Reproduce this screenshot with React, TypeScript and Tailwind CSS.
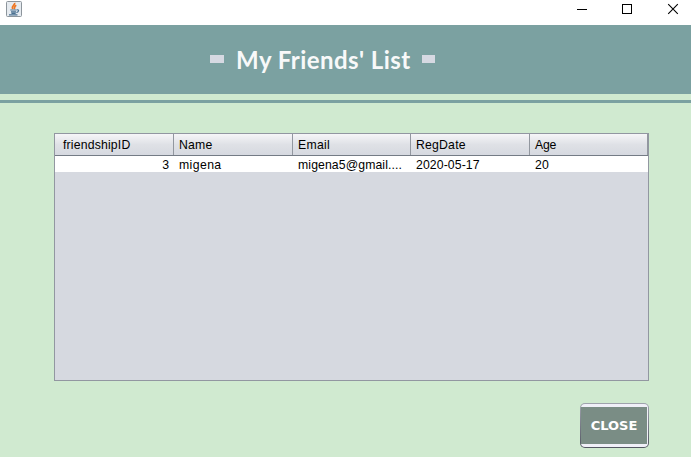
import React from 'react';

type Column = { title: string; value: string; width: string; head: string; cell: string };

const columns: Column[] = [
  { title: 'friendshipID', value: '3', width: 'w-[119px]', head: 'pl-2 tracking-[0.17px]', cell: 'pr-[5px] text-right' },
  { title: 'Name', value: 'migena', width: 'w-[119px]', head: 'pl-[5px] tracking-[0.2px]', cell: 'pl-[5px] tracking-[0.4px]' },
  { title: 'Email', value: 'migena5@gmail....', width: 'w-[118px]', head: 'pl-[5px] tracking-[0.3px]', cell: 'pl-[5px] tracking-[0.1px]' },
  { title: 'RegDate', value: '2020-05-17', width: 'w-[119px]', head: 'pl-[5px] tracking-[0.2px]', cell: 'pl-[5px] tracking-[0.1px]' },
  { title: 'Age', value: '20', width: 'w-[118px]', head: 'pl-[5px] tracking-[-0.2px]', cell: 'pl-[5px] tracking-[0.2px]' },
];

function JavaIcon() {
  return (
    <svg width="16" height="16" viewBox="0 0 16 16" fill="none">
      <rect x="0.5" y="0.5" width="15" height="15" rx="1" fill="#e6ebf0" stroke="#8d959c" />
      <path d="M8.6 1.8C9.6 4 5.2 4.6 6.6 8M10.3 4.2C7.8 5.4 9 6.4 8.2 8.2" stroke="#ee7420" strokeWidth="1.7" />
      <path d="M4.3 9h6.2M5 10.8h5M5.4 12.3h4.3M3 13.9h8.5M10.8 8.8c2.6-.5 2.2 2.2-.4 2.8" stroke="#4a7090" strokeWidth="1.2" />
    </svg>
  );
}

function TitleBar() {
  return (
    <div className="flex h-[25px] items-start justify-between bg-white pl-1.5">
      <div className="pt-px"><JavaIcon /></div>
      <svg width="131" height="25" viewBox="0 0 131 25" fill="none" stroke="#000">
        <path d="M17 9.5h10" />
        <rect x="62.5" y="4.5" width="9" height="9" />
        <path d="m108.2 4.2 9.6 9.6m0-9.6-9.6 9.6" strokeWidth="1.1" />
      </svg>
    </div>
  );
}

export default function App() {
  return (
    <div className="h-[457px] w-[691px] overflow-hidden bg-[#d0ead0] font-['Liberation_Sans',Arial,sans-serif] text-black">
      <TitleBar />
      <header className="flex h-[69px] items-start bg-[#7ba1a1] pl-[210px]">
        <span className="mt-[30px] h-2 w-3.5 bg-[#d6d9e2]" />
        <h1 className="ml-3 mt-[17px] w-[174px] whitespace-nowrap font-['Trebuchet_MS',Lato,sans-serif] text-[24px] font-bold leading-9 tracking-[0.45px] text-[#f8f9f9]">
          My Friends' List
        </h1>
        <span className="ml-3 mt-[30px] h-2 w-[13px] bg-[#d6d9e2]" />
      </header>
      <div className="mt-1.5 h-[3px] bg-[#7ba1a1]" />
      <main className="ml-[54px] mt-[30px] flex w-[595px] flex-col items-end">
        <div className="h-[248px] w-full border border-[#9297a1] bg-[#d6d9e0] text-[12.25px]">
          <div className="flex h-[22px] border-b border-[#747b85] bg-linear-to-b from-[#f6f6f8] via-[#dfe1e6] to-[#d6d9e0]">
            {columns.map((c) => (
              <div key={c.title} className={`${c.width} ${c.head} border-r border-[#92979f] leading-[23px]`}>{c.title}</div>
            ))}
          </div>
          <div className="flex h-4 bg-white">
            {columns.map((c) => (
              <div key={c.title} className={`${c.width} ${c.cell} whitespace-nowrap leading-[19px]`}>{c.value}</div>
            ))}
          </div>
        </div>
        <button className="mt-[22px] h-[45px] w-[69px] rounded-[5px] bg-linear-to-b from-[#a0a4ae] to-[#535762] p-px">
          <span className="block h-[43px] rounded-[4px] bg-[#f0f0f8] py-[3px] pr-px">
            <span className="flex h-[37px] items-center justify-center bg-[#7a8d85] font-['DejaVu_Sans',Verdana,sans-serif] text-[13px] font-bold leading-none text-white">
              CLOSE
            </span>
          </span>
        </button>
      </main>
    </div>
  );
}
